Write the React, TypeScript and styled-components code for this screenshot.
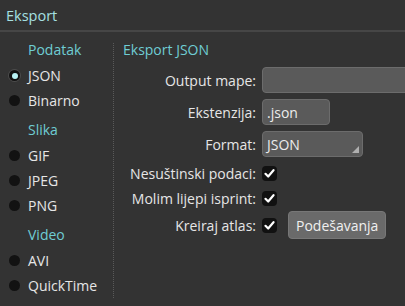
import React from "react";
import styled, { createGlobalStyle } from "styled-components";

const Global = createGlobalStyle`
  html, body { margin: 0; padding: 0; background: #333333; }
  body { font-family: "Open Sans", "Noto Sans", sans-serif; }
`;

const Window = styled.div`
  width: 405px;
  height: 306px;
  overflow: hidden;
  background: #333333;
  color: #e6e6e6;
  font-size: 14px;
  display: flex;
  flex-direction: column;
`;

const TitleBar = styled.div`
  height: 30px;
  border-bottom: 2px solid #464646;
  display: flex;
  align-items: center;
  padding-left: 6px;
  color: #a6e0e2;
  font-size: 14.5px;
`;

const Body = styled.div`
  margin-top: 11px;
  display: grid;
  grid-template-columns: 113px 1fr;
  height: 254px;
`;

const Sidebar = styled.div`
  padding-left: 9px;
  display: flex;
  flex-direction: column;
`;

const GroupHeader = styled.div<{ $first?: boolean }>`
  height: 14px;
  line-height: 14px;
  margin-top: ${(p) => (p.$first ? 0 : 10)}px;
  margin-bottom: 6px;
  padding-left: 19px;
  color: #6fcdd4;
`;

const RadioRow = styled.div`
  height: 25px;
  display: flex;
  align-items: center;
  gap: 8px;
`;

const Radio = styled.span<{ $on?: boolean }>`
  width: 11px;
  height: 11px;
  border-radius: 50%;
  background: #121212;
  box-sizing: border-box;
  display: flex;
  align-items: center;
  justify-content: center;
  box-shadow: ${(p) => (p.$on ? "0 0 0 1px #4c4c4c" : "none")};
  &::after {
    content: "";
    width: 6px;
    height: 6px;
    border-radius: 50%;
    background: ${(p) => (p.$on ? "#b8f2f4" : "transparent")};
  }
`;

const Panel = styled.div`
  border-left: 1px dotted #5a5a5a;
  padding-left: 9px;
  display: flex;
  flex-direction: column;
`;

const PanelTitle = styled.div`
  height: 14px;
  line-height: 14px;
  color: #6fcdd4;
  margin-bottom: 10px;
`;

const FormRow = styled.div<{ $h: number; $mt: number }>`
  display: grid;
  grid-template-columns: 133px 1fr;
  column-gap: 6px;
  align-items: center;
  height: ${(p) => p.$h}px;
  margin-top: ${(p) => p.$mt}px;
`;

const Label = styled.div`
  display: flex;
  justify-content: flex-end;
  white-space: nowrap;
`;

const Cell = styled.div`
  display: flex;
  align-items: center;
  gap: 11px;
  height: 100%;
`;

const Field = styled.div<{ $w: number }>`
  position: relative;
  box-sizing: border-box;
  width: ${(p) => p.$w}px;
  height: 26px;
  flex: none;
  background: #5a5a5a;
  border: 1px solid #6c6c6c;
  border-radius: 4px;
  display: flex;
  align-items: center;
  padding-left: 4px;
  color: #ececec;
`;

const Corner = styled.svg`
  position: absolute;
  right: 3px;
  bottom: 3px;
`;

const Check = styled.span`
  width: 15px;
  height: 15px;
  border-radius: 4px;
  background: #111111;
  display: flex;
  align-items: center;
  justify-content: center;
  flex: none;
`;

const Button = styled.div`
  box-sizing: border-box;
  height: 28px;
  padding: 0 7px;
  background: #6a6a6a;
  border: 1px solid #777777;
  border-radius: 4px;
  display: flex;
  align-items: center;
  color: #f0f0f0;
  flex: none;
`;

const CheckIcon = () => (
  <Check>
    <svg width="11" height="11" viewBox="0 0 11 11">
      <path d="M1.5 5.8 L4.2 8.5 L9.5 2.2" fill="none" stroke="#ffffff" strokeWidth="2.2" strokeLinecap="round" strokeLinejoin="round" />
    </svg>
  </Check>
);

const groups = [
  { title: "Podatak", items: ["JSON", "Binarno"] },
  { title: "Slika", items: ["GIF", "JPEG", "PNG"] },
  { title: "Video", items: ["AVI", "QuickTime"] },
];

export default function App() {
  return (
    <Window>
      <Global />
      <TitleBar>Eksport</TitleBar>
      <Body>
        <Sidebar>
          {groups.map((g, gi) => (
            <React.Fragment key={g.title}>
              <GroupHeader $first={gi === 0}>{g.title}</GroupHeader>
              {g.items.map((it) => (
                <RadioRow key={it}>
                  <Radio $on={it === "JSON"} />
                  <span>{it}</span>
                </RadioRow>
              ))}
            </React.Fragment>
          ))}
        </Sidebar>
        <Panel>
          <PanelTitle>Eksport JSON</PanelTitle>
          <FormRow $h={26} $mt={0}>
            <Label>Output mape:</Label>
            <Cell>
              <Field $w={170} />
            </Cell>
          </FormRow>
          <FormRow $h={26} $mt={6}>
            <Label>Ekstenzija:</Label>
            <Cell>
              <Field $w={68}>.json</Field>
            </Cell>
          </FormRow>
          <FormRow $h={26} $mt={6}>
            <Label>Format:</Label>
            <Cell>
              <Field $w={101}>
                JSON
                <Corner width="7" height="7" viewBox="0 0 7 7">
                  <path d="M7 0 L7 7 L0 7 Z" fill="#b0b0b0" />
                </Corner>
              </Field>
            </Cell>
          </FormRow>
          <FormRow $h={24} $mt={4}>
            <Label>Nesuštinski podaci:</Label>
            <Cell>
              <CheckIcon />
            </Cell>
          </FormRow>
          <FormRow $h={24} $mt={1}>
            <Label>Molim lijepi isprint:</Label>
            <Cell>
              <CheckIcon />
            </Cell>
          </FormRow>
          <FormRow $h={24} $mt={1}>
            <Label>Kreiraj atlas:</Label>
            <Cell>
              <CheckIcon />
              <Button>Podešavanja</Button>
            </Cell>
          </FormRow>
        </Panel>
      </Body>
    </Window>
  );
}
